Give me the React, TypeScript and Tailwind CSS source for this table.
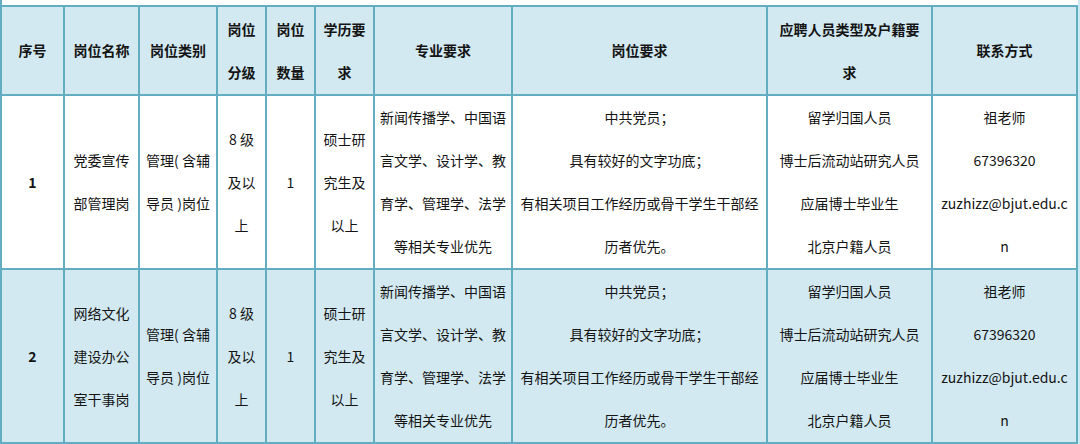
import React from "react";

const B = "border-2 border-[#62adbf]";

function Lines({ lines }: { lines: string[] }) {
  return (
    <>
      {lines.map((l, i) => (
        <div key={i}>{l}</div>
      ))}
    </>
  );
}

const headers: string[][] = [
  ["序号"],
  ["岗位名称"],
  ["岗位类别"],
  ["岗位", "分级"],
  ["岗位", "数量"],
  ["学历要", "求"],
  ["专业要求"],
  ["岗位要求"],
  ["应聘人员类型及户籍要", "求"],
  ["联系方式"],
];

const rows: { bg: string; cells: string[][] }[] = [
  {
    bg: "bg-white",
    cells: [
      ["1"],
      ["党委宣传", "部管理岗"],
      ["管理( 含辅", "导员 )岗位"],
      ["8 级", "及以", "上"],
      ["1"],
      ["硕士研", "究生及", "以上"],
      ["新闻传播学、中国语", "言文学、设计学、教", "育学、管理学、法学", "等相关专业优先"],
      ["中共党员；", "具有较好的文字功底；", "有相关项目工作经历或骨干学生干部经", "历者优先。"],
      ["留学归国人员", "博士后流动站研究人员", "应届博士毕业生", "北京户籍人员"],
      ["祖老师", "67396320", "zuzhizz@bjut.edu.c", "n"],
    ],
  },
  {
    bg: "bg-[#d2e9f1]",
    cells: [
      ["2"],
      ["网络文化", "建设办公", "室干事岗"],
      ["管理( 含辅", "导员 )岗位"],
      ["8 级", "及以", "上"],
      ["1"],
      ["硕士研", "究生及", "以上"],
      ["新闻传播学、中国语", "言文学、设计学、教", "育学、管理学、法学", "等相关专业优先"],
      ["中共党员；", "具有较好的文字功底；", "有相关项目工作经历或骨干学生干部经", "历者优先。"],
      ["留学归国人员", "博士后流动站研究人员", "应届博士毕业生", "北京户籍人员"],
      ["祖老师", "67396320", "zuzhizz@bjut.edu.c", "n"],
    ],
  },
];

const widths = [
  "w-[63px]",
  "w-[75px]",
  "w-[78px]",
  "w-[49px]",
  "w-[49px]",
  "w-[59px]",
  "w-[138px]",
  "w-[255px]",
  "w-[165px]",
  "w-[145px]",
];

export default function App() {
  return (
    <div
      className="w-[1080px] h-[444px] bg-white overflow-hidden flex text-[#141414] text-[14px] leading-[43px]"
      style={{ fontFamily: '"Noto Sans CJK SC", "Noto Sans", sans-serif' }}
    >
      <div className="w-[1078px] flex flex-col">
        <div className="h-[5px] border-l-2 border-[#62adbf] bg-white" />
        <table className="table-fixed border-collapse w-[1078px]">
          <colgroup>
            {widths.map((w, i) => (
              <col key={i} className={w} />
            ))}
          </colgroup>
          <thead>
            <tr className="h-[89px] bg-[#d2e9f1]">
              {headers.map((h, i) => (
                <th key={i} className={`${B} p-0 text-center align-middle font-bold`}>
                  <Lines lines={h} />
                </th>
              ))}
            </tr>
          </thead>
          <tbody>
            {rows.map((r, ri) => (
              <tr key={ri} className={`${ri === 0 ? "h-[173px]" : "h-[174px]"} ${r.bg}`}>
                {r.cells.map((c, ci) => (
                  <td
                    key={ci}
                    className={`${B} p-0 text-center align-middle ${ci === 0 ? "font-bold" : "font-normal"}`}
                  >
                    <Lines lines={c} />
                  </td>
                ))}
              </tr>
            ))}
          </tbody>
        </table>
      </div>
      <div className="w-[2px] bg-[#cbe9f3]" />
    </div>
  );
}
